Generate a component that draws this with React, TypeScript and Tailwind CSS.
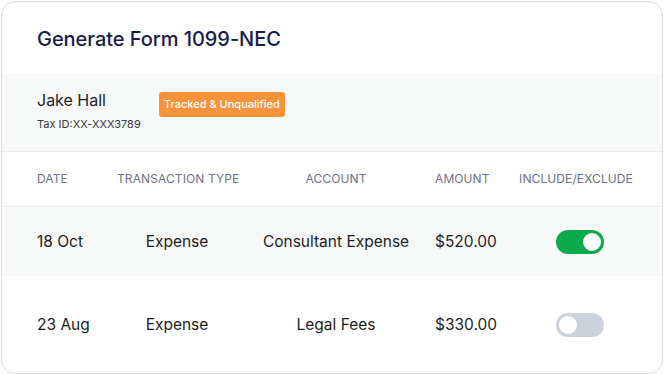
import * as React from "react";

type Row = {
  date: string;
  type: string;
  account: string;
  amount: string;
  included: boolean;
};

const rows: Row[] = [
  { date: "18 Oct", type: "Expense", account: "Consultant Expense", amount: "$520.00", included: true },
  { date: "23 Aug", type: "Expense", account: "Legal Fees", amount: "$330.00", included: false },
];

const cols = "grid grid-cols-[80px_120px_198px_81px_120px] items-center whitespace-nowrap pl-[35px]";

function Toggle({ on }: { on: boolean }) {
  return (
    <div
      className={
        on
          ? "flex h-6 w-12 items-center justify-end rounded-full bg-[#0aaa4d] px-[3px]"
          : "flex h-6 w-12 items-center justify-start rounded-full bg-[#ccd2dc] px-[3px]"
      }
    >
      <div className="h-[18px] w-[18px] rounded-full bg-white" />
    </div>
  );
}

export default function App() {
  return (
    <div className="h-[375px] w-[664px] bg-white font-['Inter',sans-serif]">
      <div className="ml-px mt-px flex h-[373px] w-[662px] flex-col overflow-hidden rounded-[14px] border border-[#dcdde0] bg-white">
        <div className="flex h-[72px] shrink-0 items-center pl-[35px] pt-[2px]">
          <h1 className="text-[20px] font-medium tracking-[-0.05px] text-[#171c48]">
            Generate Form 1099-NEC
          </h1>
        </div>

        <div className="flex h-[78px] shrink-0 items-start gap-[21px] border-b border-[#ececee] bg-[#f7f8f8] pl-[35px] pt-[15px]">
          <div className="w-[101px] whitespace-nowrap">
            <p className="text-[16px] leading-[22px] text-[#222226]">Jake Hall</p>
            <p className="mt-[6px] text-[11px] leading-[14px] text-[#3a3a40]">Tax ID:XX-XXX3789</p>
          </div>
          <span className="mt-[3px] whitespace-nowrap rounded-[3px] bg-[#f8923b] px-[5px] py-[5px] text-[11px] leading-[15px] font-medium text-white">
            Tracked &amp; Unqualified
          </span>
        </div>

        <div className={`${cols} h-[55px] shrink-0 border-b border-[#ececee] text-[12px] tracking-[0.1px] text-[#6d7186] uppercase`}>
          <div>Date</div>
          <div className="text-center">Transaction Type</div>
          <div className="text-center">Account</div>
          <div>Amount</div>
          <div className="text-center">Include/Exclude</div>
        </div>

        {rows.map((r, i) => (
          <div
            key={r.date}
            className={
              i === 0
                ? `${cols} h-[69px] shrink-0 bg-[#f7f8f8] pt-[1px] text-[15.5px] text-[#1d1d21]`
                : `${cols} flex-1 pt-[1px] text-[15.5px] text-[#1d1d21]`
            }
          >
            <div>{r.date}</div>
            <div className="text-center">{r.type}</div>
            <div className="text-center">{r.account}</div>
            <div>{r.amount}</div>
            <div className="flex justify-center pl-2">
              <Toggle on={r.included} />
            </div>
          </div>
        ))}
      </div>
    </div>
  );
}
